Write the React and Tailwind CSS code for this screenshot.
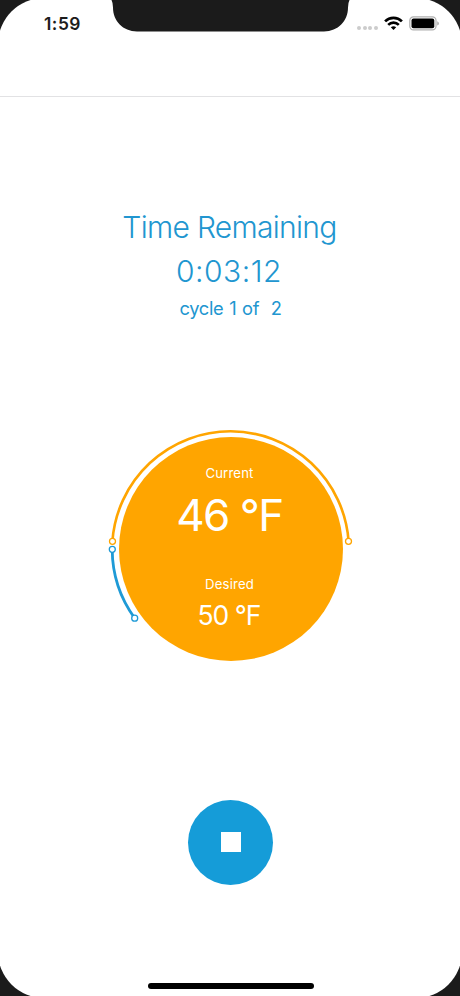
const dots = [0, 1, 2, 3]

function StatusBar() {
  return (
    <div className="relative flex h-[97px] items-start justify-between border-b border-[#e2e2e4]">
      <span className="ml-[44px] mt-[12px] text-[17.4px] font-semibold leading-[24px] tracking-[0.5px] text-[#1c1c1c]">
        1:59
      </span>

      {/* Notch */}
      <svg
        className="absolute left-[109px] top-0"
        width="243"
        height="32"
        viewBox="0 0 243 32"
        fill="#1b1b1b"
      >
        <path d="M2.5 0Q4 3 4 7.5C4 21 14 31.4 28 31.4H215C229 31.4 239 21 239 7.5Q239 3 240.5 0Z" />
      </svg>

      <div className="mr-[20px] mt-[15px] flex h-4 items-center">
        <div className="mr-[6px] mt-[9px] flex gap-[1.7px]">
          {dots.map((d) => (
            <span key={d} className="size-[4px] rounded-full bg-[#cccccc]" />
          ))}
        </div>
        <svg className="mr-[6px]" width="19" height="14" viewBox="0 0 19 14" fill="none" stroke="#000">
          <path d="M1.1 5.4C5.7 .8 13.3 .8 17.9 5.4" strokeWidth="2.7" />
          <path d="M4.2 8.8C7.1 5.9 11.9 5.9 14.8 8.8" strokeWidth="2.6" />
          <path d="M9.5 14L6.8 11.3Q9.5 9.2 12.2 11.3Z" fill="#000" stroke="none" />
        </svg>
        <svg width="31" height="15" viewBox="0 0 31 15">
          <rect x="0.8" y="0.9" width="26.2" height="13" rx="3.6" fill="#fff" stroke="#b0b0b0" strokeWidth="1.2" />
          <rect x="2.5" y="2.6" width="22.8" height="9.6" rx="2" fill="#000" />
          <path d="M28.2 5.2Q30 5.9 30 7.4T28.2 9.6Z" fill="#b0b0b0" />
        </svg>
      </div>
    </div>
  )
}

function Dial() {
  return (
    <div className="relative ml-[1px] flex size-[224px] flex-col items-center rounded-full bg-[#ffa500] pr-[2px] pt-[26px] text-white">
      {/* Progress ring */}
      <svg
        className="absolute -left-[8px] -top-[8px] overflow-visible"
        width="240"
        height="240"
        viewBox="0 0 240 240"
        fill="none"
      >
        <g stroke="#ffa500">
          <path d="M1.4 112.3A118.4 118.4 0 0 1 237.6 112.3" strokeWidth="2.6" />
          <circle cx="1.5" cy="112.3" r="3" fill="#fff" strokeWidth="1.3" />
          <circle cx="237.5" cy="112.3" r="3" fill="#fff" strokeWidth="1.3" />
        </g>
        <g stroke="#1e9ad6">
          <path d="M1.2 120.3A118.2 118.2 0 0 0 23.7 189.2" strokeWidth="2.8" />
          <circle cx="1.3" cy="120.3" r="3" fill="#fff" strokeWidth="1.3" />
          <circle cx="23.7" cy="189.2" r="3" fill="#fff" strokeWidth="1.3" />
        </g>
      </svg>

      <span className="text-[13.2px] leading-[20px] tracking-[0.15px]">Current</span>
      <span className="text-[44px] leading-[64px] tracking-[-1.5px]">46 °F</span>
      <span className="mt-[27px] text-[13.2px] leading-[20px] tracking-[0.15px]">Desired</span>
      <span className="mr-[1px] text-[26.5px] leading-[42px] tracking-[-1px]">50 °F</span>
    </div>
  )
}

export default function App() {
  return (
    <div className="h-[996px] w-[460px] overflow-hidden bg-[#1b1b1b] font-['Inter','Liberation_Sans',sans-serif]">
      <div className="-m-[2px] h-[1000px] w-[464px] rounded-[46px] bg-white p-[2px]">
        <StatusBar />

        <main className="flex flex-col items-center">
          <div className="mt-[108px] flex flex-col items-center text-[#2196d0]">
            <h1 className="mr-[1px] text-[30px] font-[360] leading-[44px] tracking-[-0.7px]">Time Remaining</h1>
            <p className="mr-[2px] text-[30px] font-[360] leading-[44px] tracking-[0.5px]">0:03:12</p>
            <p className="ml-[1px] whitespace-pre text-[18.3px] leading-[30px] tracking-[-0.3px] [word-spacing:0.9px]">
              cycle 1 of  2
            </p>
          </div>

          <div className="mt-[114px]">
            <Dial />
          </div>

          <button className="ml-[1px] mt-[139px] flex size-[85px] items-center justify-center rounded-full bg-[#159cd8]">
            <span className="mb-[1px] size-[20px] bg-white" />
          </button>

          <div className="ml-[1px] mt-[98px] h-[6px] w-[166px] rounded-full bg-black" />
        </main>
      </div>
    </div>
  )
}
